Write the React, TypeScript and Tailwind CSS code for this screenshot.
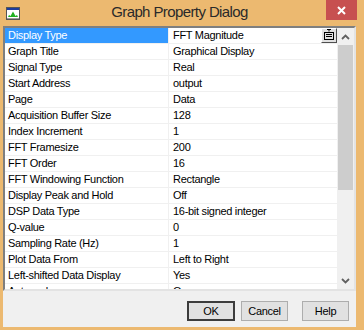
import React from "react";

const rows: [string, string][] = [
  ["Display Type", "FFT Magnitude"],
  ["Graph Title", "Graphical Display"],
  ["Signal Type", "Real"],
  ["Start Address", "output"],
  ["Page", "Data"],
  ["Acquisition Buffer Size", "128"],
  ["Index Increment", "1"],
  ["FFT Framesize", "200"],
  ["FFT Order", "16"],
  ["FFT Windowing Function", "Rectangle"],
  ["Display Peak and Hold", "Off"],
  ["DSP Data Type", "16-bit signed integer"],
  ["Q-value", "0"],
  ["Sampling Rate (Hz)", "1"],
  ["Plot Data From", "Left to Right"],
  ["Left-shifted Data Display", "Yes"],
  ["Autoscale", "On"],
];

function Chevron({ up }: { up: boolean }) {
  return (
    <svg width="9" height="6" viewBox="0 0 9 6">
      <path
        d={up ? "M1 5 L4.5 1.5 L8 5" : "M1 1 L4.5 4.5 L8 1"}
        fill="none"
        stroke="#606060"
        strokeWidth="1.8"
      />
    </svg>
  );
}

function Btn({ label, def, w, cls }: { label: string; def?: boolean; w: string; cls?: string }) {
  return (
    <div
      className={`${w} h-[20px] flex items-center justify-center bg-[#E1E1E1] text-[11px] tracking-[-0.3px] text-black ${
        def ? "border-2 border-[#3c3c3c]" : "border border-[#ADADAD]"
      } ${cls ?? ""}`}
    >
      {label}
    </div>
  );
}

export default function App() {
  return (
    <div className="w-[364px] h-[330px] bg-[#ECB970] flex flex-col font-['Liberation_Sans',Arial,sans-serif]">
      {/* Title bar */}
      <div className="h-[26px] flex items-start">
        <div className="ml-[6px] mt-[7px] w-[14px] h-[13px]">
          <svg width="14" height="13" viewBox="0 0 14 13">
            <rect x="0.5" y="0.5" width="13" height="12" fill="#ffffff" stroke="#555555" />
            <rect x="1" y="1" width="12" height="2" fill="#1d3c9e" />
            <path d="M2 10 L3 8 L4.5 9 L7 4.5 L9.5 9 L11 8 L12 10 Z" fill="#20b020" />
            <rect x="1" y="11" width="12" height="1" fill="#9a9a9a" />
          </svg>
        </div>
        <div className="flex-1 h-[26px] flex items-center justify-center pl-[13px] pb-[1px] text-[15px] tracking-[-0.6px] text-[#2a2a2a]">
          Graph Property Dialog
        </div>
        <div className="w-[31px] h-[20px] mr-[7px] bg-[#C75050] flex items-center justify-center">
          <svg width="9" height="9" viewBox="0 0 9 9">
            <path d="M1 1 L8 8 M8 1 L1 8" stroke="#ffffff" strokeWidth="2" />
          </svg>
        </div>
      </div>

      {/* Client area */}
      <div className="flex-1 ml-[3px] mr-[8px] mb-[3px] bg-[#F0F0F0] flex flex-col">
        <div className="h-[265px] flex bg-white border-t-2 border-l-2 border-t-[#7f7f7f] border-l-[#7f7f7f] border-r-2 border-b-2 border-r-[#E3E3E3] border-b-[#E3E3E3]">
          <div className="flex-1 overflow-hidden text-[11px] tracking-[-0.3px] text-black">
            {rows.map(([name, value], i) => (
              <div key={name} className="h-[16px] flex border-b border-[#F0F0F0]">
                <div
                  className={`w-[164px] border-r border-[#F0F0F0] pl-[3px] leading-[15px] whitespace-nowrap ${
                    i === 0 ? "bg-[#3399FF] text-white" : ""
                  }`}
                >
                  {name}
                </div>
                <div className="flex-1 flex pl-[4px] leading-[15px] whitespace-nowrap">
                  <span className="flex-1">{value}</span>
                  {i === 0 && (
                    <div className="w-[16px] h-[15px] bg-[#E1E1E1] border-r border-b border-[#505050] border-t border-l border-t-white border-l-white flex items-start justify-center">
                      <svg width="12" height="12" viewBox="0 0 12 12">
                        <path d="M4 0.5 H8 M6 0.5 V2.5" stroke="#000" strokeWidth="1" />
                        <rect x="1.5" y="3.5" width="9" height="7" fill="none" stroke="#000" />
                        <path d="M3 5.5 H9 M3 7.5 H9" stroke="#000" strokeWidth="1" />
                      </svg>
                    </div>
                  )}
                </div>
              </div>
            ))}
          </div>
          {/* Scrollbar */}
          <div className="w-[17px] flex flex-col bg-[#F0F0F0]">
            <div className="h-[17px] flex items-center justify-center">
              <Chevron up />
            </div>
            <div className="h-[145px] ml-[1px] mr-[1px] bg-[#CDCDCD]" />
            <div className="flex-1" />
            <div className="h-[17px] flex items-center justify-center">
              <Chevron up={false} />
            </div>
          </div>
        </div>

        {/* Buttons */}
        <div className="flex-1 flex justify-end items-start pt-[10px] pr-[7px]">
          <Btn label="OK" def w="w-[48px]" cls="mr-[6px]" />
          <Btn label="Cancel" w="w-[47px]" cls="mr-[14px]" />
          <Btn label="Help" w="w-[47px]" />
        </div>
      </div>
    </div>
  );
}
